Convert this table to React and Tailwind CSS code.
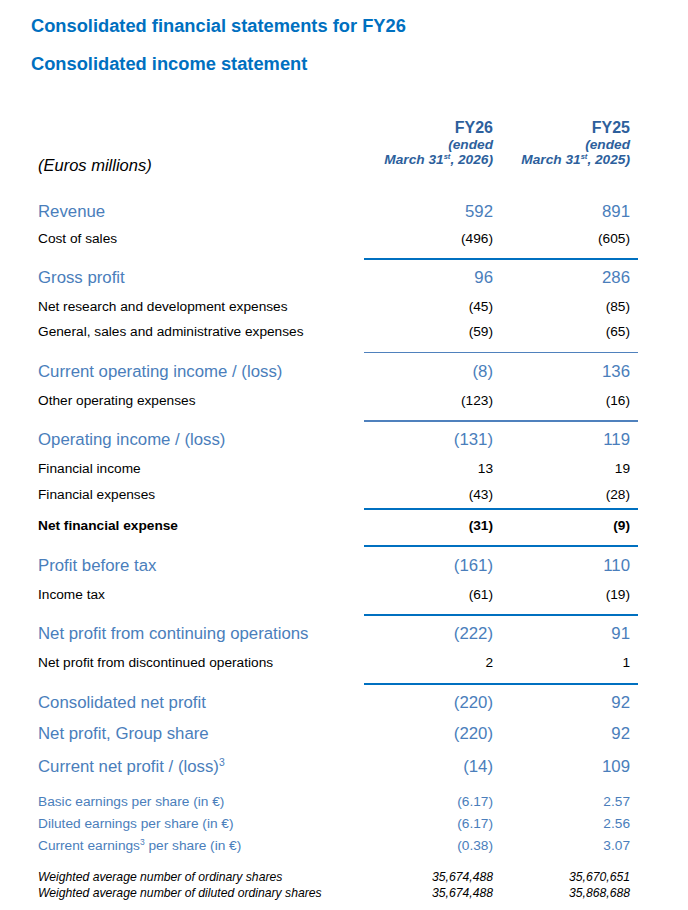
import React from 'react';

const rows = [
  { type: 'row', kind: 'main', label: 'Revenue', a: '592', b: '891', cls: 'mt-[24px] h-[28px]' },
  { type: 'row', kind: 'sub', label: 'Cost of sales', a: '(496)', b: '(605)', cls: 'mt-0 h-[26px]' },
  { type: 'sep', cls: 'mt-[6px] h-[2px] bg-[#0070c0]' },
  { type: 'row', kind: 'main', label: 'Gross profit', a: '96', b: '286', cls: 'mt-[4px] h-[28px]' },
  { type: 'row', kind: 'sub', label: 'Net research and development expenses', a: '(45)', b: '(85)', cls: 'mt-[3px] h-[24px]' },
  { type: 'row', kind: 'sub', label: 'General, sales and administrative expenses', a: '(59)', b: '(65)', cls: 'mt-[1px] h-[24px]' },
  { type: 'sep', cls: 'mt-[8px] h-[1px] bg-[#4f81bd]' },
  { type: 'row', kind: 'main', label: 'Current operating income / (loss)', a: '(8)', b: '136', cls: 'mt-[5px] h-[28px]' },
  { type: 'row', kind: 'sub', label: 'Other operating expenses', a: '(123)', b: '(16)', cls: 'mt-[3px] h-[24px]' },
  { type: 'sep', cls: 'mt-[7px] h-[2px] bg-[#4f81bd]' },
  { type: 'row', kind: 'main', label: 'Operating income / (loss)', a: '(131)', b: '119', cls: 'mt-[4px] h-[28px]' },
  { type: 'row', kind: 'sub', label: 'Financial income', a: '13', b: '19', cls: 'mt-[3px] h-[24px]' },
  { type: 'row', kind: 'sub', label: 'Financial expenses', a: '(43)', b: '(28)', cls: 'mt-[2px] h-[24px]' },
  { type: 'sep', cls: 'mt-[1px] h-[2px] bg-[#0070c0]' },
  { type: 'row', kind: 'bold', label: 'Net financial expense', a: '(31)', b: '(9)', cls: 'mt-[4px] h-[24px]' },
  { type: 'sep', cls: 'mt-[7px] h-[2px] bg-[#0070c0]' },
  { type: 'row', kind: 'main', label: 'Profit before tax', a: '(161)', b: '110', cls: 'mt-[5px] h-[28px]' },
  { type: 'row', kind: 'sub', label: 'Income tax', a: '(61)', b: '(19)', cls: 'mt-[3px] h-[24px]' },
  { type: 'sep', cls: 'mt-[7px] h-[2px] bg-[#0070c0]' },
  { type: 'row', kind: 'main', label: 'Net profit from continuing operations', a: '(222)', b: '91', cls: 'mt-[4px] h-[28px]' },
  { type: 'row', kind: 'sub', label: 'Net profit from discontinued operations', a: '2', b: '1', cls: 'mt-[3px] h-[24px]' },
  { type: 'sep', cls: 'mt-[8px] h-[2px] bg-[#0070c0]' },
  { type: 'row', kind: 'main', label: 'Consolidated net profit', a: '(220)', b: '92', cls: 'mt-[4px] h-[28px]' },
  { type: 'row', kind: 'main', label: 'Net profit, Group share', a: '(220)', b: '92', cls: 'mt-[3px] h-[28px]' },
  { type: 'row', kind: 'main', label: 'Current net profit / (loss)', sup: '3', a: '(14)', b: '109', cls: 'mt-[5px] h-[28px]' },
  { type: 'row', kind: 'eps', label: 'Basic earnings per share (in €)', a: '(6.17)', b: '2.57', cls: 'mt-[11px] h-[20px]' },
  { type: 'row', kind: 'eps', label: 'Diluted earnings per share (in €)', a: '(6.17)', b: '2.56', cls: 'mt-[2px] h-[20px]' },
  { type: 'row', kind: 'eps', label: 'Current earnings', sup: '3', rest: ' per share (in €)', a: '(0.38)', b: '3.07', cls: 'mt-[2px] h-[20px]' },
  { type: 'row', kind: 'share', label: 'Weighted average number of ordinary shares', a: '35,674,488', b: '35,670,651', cls: 'mt-[12px] h-[16px]' },
  { type: 'row', kind: 'share', label: 'Weighted average number of diluted ordinary shares', a: '35,674,488', b: '35,868,688', cls: 'mt-0 h-[16px]' },
];

const kindText = {
  main: 'text-[16.8px] text-[#4a7ebb]',
  sub: 'text-[13.7px] text-black',
  bold: 'text-[13.7px] font-bold text-black',
  eps: 'text-[13.7px] text-[#4a7ebb]',
  share: 'text-[12.2px] italic text-black',
};

function Row({ row }) {
  const text = kindText[row.kind];
  return (
    <div className={`grid grid-cols-[334px_137px_137px] items-center ${row.cls} ${text}`}>
      <div className="pl-2 whitespace-nowrap">
        {row.label}
        {row.sup && <sup className="text-[0.62em] top-[-0.6em]">{row.sup}</sup>}
        {row.rest}
      </div>
      <div className="pr-2 text-right">{row.a}</div>
      <div className="pr-2 text-right">{row.b}</div>
    </div>
  );
}

export default function App() {
  return (
    <div className="w-[688px] h-[910px] bg-white font-['Liberation_Sans',Arial,sans-serif] overflow-hidden">
      {/* Titles */}
      <div className="pl-[31px] pt-[15px]">
        <h1 className="text-[18.3px] leading-[22px] font-bold text-[#0070c0]">
          Consolidated financial statements for FY26
        </h1>
        <h2 className="mt-[16px] text-[18.3px] leading-[22px] font-bold text-[#0070c0]">
          Consolidated income statement
        </h2>
      </div>

      <div className="ml-[30px] w-[608px]">
        {/* Column headings */}
        <div className="mt-[43px] grid grid-cols-[334px_137px_137px]">
          <div className="pl-2 pt-[38px] text-[16.5px] leading-[18px] italic text-black">(Euros millions)</div>
          {[
            ['FY26', '2026)'],
            ['FY25', '2025)'],
          ].map(([fy, yr]) => (
            <div key={fy} className="pr-2 text-right font-bold text-[#2d5f9c]">
              <div className="text-[16px] leading-[19px]">{fy}</div>
              <div className="text-[13.7px] leading-[15px] italic">(ended</div>
              <div className="text-[13.7px] leading-[15px] italic whitespace-nowrap">
                March 31<sup className="text-[0.55em] top-[-0.6em]">st</sup>, {yr}
              </div>
            </div>
          ))}
        </div>

        {/* Statement rows */}
        {rows.map((row, i) =>
          row.type === 'sep' ? (
            <div key={i} className={`ml-[334px] w-[274px] ${row.cls}`} />
          ) : (
            <Row key={i} row={row} />
          )
        )}
      </div>
    </div>
  );
}
